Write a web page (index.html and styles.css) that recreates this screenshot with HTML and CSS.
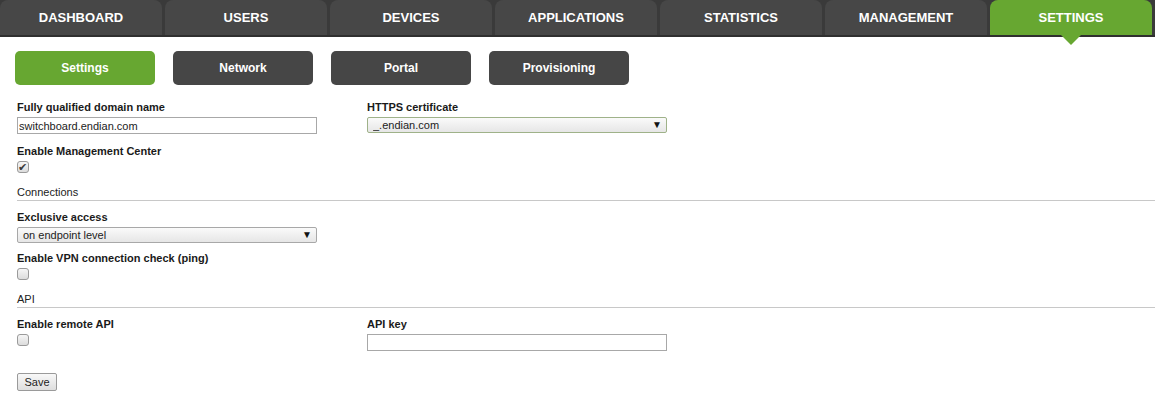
FILE: index.html
```html
<!DOCTYPE html>
<html lang="en">
<head>
  <meta charset="UTF-8">
  <title>Settings</title>
  <link rel="stylesheet" href="styles.css">
</head>
<body>
  <nav class="tabs">
    <a class="tab" href="#">DASHBOARD</a>
    <a class="tab" href="#">USERS</a>
    <a class="tab" href="#">DEVICES</a>
    <a class="tab" href="#">APPLICATIONS</a>
    <a class="tab" href="#">STATISTICS</a>
    <a class="tab" href="#">MANAGEMENT</a>
    <a class="tab active" href="#">SETTINGS</a>
  </nav>

  <div class="subnav">
    <a class="sub active" href="#">Settings</a>
    <a class="sub" href="#">Network</a>
    <a class="sub" href="#">Portal</a>
    <a class="sub" href="#">Provisioning</a>
  </div>

  <form class="settings">
    <div class="row">
      <div class="field">
        <label>Fully qualified domain name</label>
        <input class="text" type="text" value="switchboard.endian.com">
      </div>
      <div class="field">
        <label>HTTPS certificate</label>
        <div class="select focus">
          <select><option>_.endian.com</option></select>
        </div>
      </div>
    </div>

    <div class="field">
      <label>Enable Management Center</label>
      <input class="check" type="checkbox" checked>
    </div>

    <div class="section">Connections</div>

    <div class="field tight">
      <label>Exclusive access</label>
      <div class="select">
        <select><option>on endpoint level</option></select>
      </div>
    </div>

    <div class="field">
      <label>Enable VPN connection check (ping)</label>
      <input class="check" type="checkbox">
    </div>

    <div class="section">API</div>

    <div class="row">
      <div class="field">
        <label>Enable remote API</label>
        <input class="check" type="checkbox">
      </div>
      <div class="field">
        <label>API key</label>
        <input class="text" type="text">
      </div>
    </div>

    <button class="save" type="button">Save</button>
  </form>
</body>
</html>
```

FILE: styles.css
```css
* {
  box-sizing: border-box;
}

body {
  margin: 0;
  font-family: "Liberation Sans", Arial, sans-serif;
  font-size: 11px;
  color: #1a1a1a;
  background: #fff;
}

/* main tabs */
.tabs {
  display: flex;
  height: 37px;
  background: #3a3a3a;
  border-bottom: 2px solid #2f2f2f;
}

.tab {
  position: relative;
  flex: 1;
  margin-right: 3px;
  height: 35px;
  line-height: 35px;
  text-align: center;
  font-size: 13px;
  font-weight: bold;
  color: #fff;
  text-decoration: none;
  background: #474747;
  border-radius: 8px 8px 0 0;
}

.tab.active {
  background: #67a731;
}

.tab.active::after {
  content: "";
  position: absolute;
  left: 50%;
  top: 35px;
  margin-left: -10px;
  border-left: 10px solid transparent;
  border-right: 10px solid transparent;
  border-top: 10px solid #67a731;
}

/* sub navigation */
.subnav {
  display: flex;
  gap: 18px;
  margin: 14px 0 0 15px;
}

.sub {
  width: 140px;
  height: 34px;
  line-height: 34px;
  text-align: center;
  font-size: 12px;
  font-weight: bold;
  color: #fff;
  text-decoration: none;
  background: #464646;
  border-radius: 5px;
}

.sub.active {
  background: #67a731;
}

/* form */
.settings {
  padding: 15px 0 0 17px;
}

.row {
  display: grid;
  grid-template-columns: 350px 300px;
}

.field {
  margin-bottom: 10px;
}

.field.tight {
  margin-bottom: 8px;
}

.field label {
  display: block;
  line-height: 14px;
  font-weight: bold;
  margin-bottom: 3px;
}

.section {
  margin: 12px 0 9px;
  padding-bottom: 1px;
  line-height: 14px;
  color: #222;
  border-bottom: 1px solid #c8c8c8;
}

.text {
  display: block;
  width: 300px;
  height: 17px;
  padding: 0 1px;
  font: 11px "Liberation Sans", Arial, sans-serif;
  color: #222;
  border: 1px solid #a8a8a8;
  background: #fff;
}

.select {
  position: relative;
  width: 300px;
}

.select select {
  appearance: none;
  display: block;
  width: 100%;
  height: 16px;
  padding: 0 0 0 5px;
  font: 11px "Liberation Sans", Arial, sans-serif;
  color: #222;
  border: 1px solid #a8a8a8;
  border-radius: 2px;
  background: linear-gradient(#fafafa, #e6e6e6);
}

.select.focus select {
  border-color: #9fb289;
}

.select::after {
  content: "▼";
  position: absolute;
  right: 5px;
  top: 2px;
  font-size: 10px;
  line-height: 12px;
  color: #111;
  pointer-events: none;
}

.check {
  appearance: none;
  display: block;
  position: relative;
  width: 12px;
  height: 12px;
  margin: 1px 0 0;
  border: 1px solid #9a9a9a;
  border-radius: 3px;
  background: linear-gradient(#f6f6f6, #dcdcdc);
}

.check:checked::after {
  content: "✔";
  position: absolute;
  left: 0;
  top: -1px;
  font-size: 11px;
  line-height: 12px;
  color: #3a3a3a;
}

.save {
  display: block;
  margin-top: 12px;
  width: 40px;
  height: 18px;
  padding: 0;
  font: 11px "Liberation Sans", Arial, sans-serif;
  color: #222;
  border: 1px solid #9a9a9a;
  border-radius: 2px;
  background: linear-gradient(#f8f8f8, #dedede);
}
```
